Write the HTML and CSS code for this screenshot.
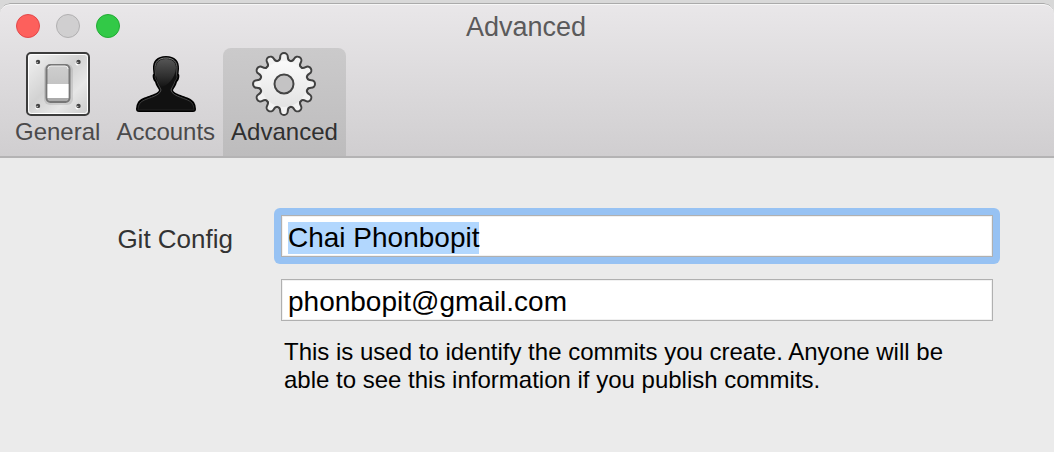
FILE: index.html
```
<!DOCTYPE html>
<html lang="en">
<head>
<meta charset="utf-8">
<title>Advanced</title>
<link rel="stylesheet" href="styles.css">
</head>
<body>
<main class="window">
  <header class="header">
    <div class="titlebar">
      <div class="controls">
        <button class="control close" type="button" aria-label="Close"></button>
        <button class="control minimize" type="button" aria-label="Minimize" disabled></button>
        <button class="control expand" type="button" aria-label="Zoom"></button>
      </div>
      <h1 class="title">Advanced</h1>
    </div>
    <nav class="tabs">
      <button class="tab" type="button">
        <svg class="icon" viewBox="0 0 64 64" aria-hidden="true">
          <defs>
            <linearGradient id="plate" x1="0" y1="0" x2="1" y2="1"><stop offset="0" stop-color="#f4f4f4"/><stop offset=".45" stop-color="#d2d2d2"/><stop offset=".7" stop-color="#e6e6e6"/><stop offset="1" stop-color="#cacaca"/></linearGradient>
            <linearGradient id="rocker" x1="0" y1="0" x2="0" y2="1"><stop offset="0" stop-color="#cfcfcf"/><stop offset="1" stop-color="#b9b9b9"/></linearGradient>
          </defs>
          <rect x="1" y="1" width="62" height="62" rx="4" fill="url(#plate)" stroke="#3c3c3c" stroke-width="2"/>
          <rect x="2.5" y="2.5" width="59" height="59" rx="3" fill="none" stroke="#fff"/>
          <rect x="18" y="12" width="29" height="41" rx="6" fill="#888" opacity=".25"/>
          <rect x="20.500" y="13" width="23" height="37" rx="4" fill="url(#rocker)" stroke="#777" stroke-width="2"/>
          <path d="M22 17q0-3 3-3h14q3 0 3 3" fill="none" stroke="#eee"/>
          <path d="M21.500 32h21v14h-21z" fill="#fff"/>
          <path d="M22 46h20q0 3-3 3H25q-3 0-3-3" fill="#aaa"/>
          <g fill="#fff"><circle cx="11.500" cy="11.500" r="2"/><circle cx="51.500" cy="11.500" r="2"/><circle cx="11.500" cy="55.500" r="2"/><circle cx="51.500" cy="55.500" r="2"/></g>
          <g fill="#444"><circle cx="12" cy="10" r="2.200"/><circle cx="52.500" cy="10" r="2.200"/><circle cx="12" cy="54" r="2.200"/><circle cx="52.500" cy="54" r="2.200"/></g>
          <g fill="#bbb"><circle cx="11.200" cy="10.500" r=".8"/><circle cx="51.700" cy="10.500" r=".8"/><circle cx="11.200" cy="54.500" r=".8"/><circle cx="51.700" cy="54.500" r=".8"/></g>
        </svg>
        <span>General</span>
      </button>
      <button class="tab" type="button">
        <svg class="icon" viewBox="0 0 64 64" aria-hidden="true">
          <defs>
            <linearGradient id="head" x1="0" y1="0" x2="0" y2="1"><stop offset="0" stop-color="#555"/><stop offset=".6" stop-color="#303030"/><stop offset="1" stop-color="#141414"/></linearGradient>
            <linearGradient id="rim" x1="0" y1="0" x2="0" y2="1"><stop offset="0" stop-color="#888"/><stop offset=".4" stop-color="#333"/><stop offset=".65" stop-color="#555"/><stop offset="1" stop-color="#222"/></linearGradient>
          </defs>
          <path d="M32 4C23 4 18.500 9 19 17L19.500 22C18 22 18.500 28 21 30C22 34 24 36 25 38C24 43 8 44 4 50Q2 53 2 57Q2 60 5 60H59Q62 60 62 57Q62 53 60 50C56 44 40 43 39 38C40 36 42 34 43 30C45.500 28 46 22 44.500 22L45 17C45.500 9 41 4 32 4Z" fill="#000"/>
          <path d="M32 6C24.500 6 20.500 10 21 17L21.500 23C20.500 24 21 27 23 29C24 33 26 35 27 38C26 45 10 46 6 51Q4 53.500 4 58H60Q60 53.500 58 51C54 46 38 45 37 38C38 35 40 33 41 29C43 27 43.500 24 42.500 23L43 17C43.500 10 39.500 6 32 6Z" fill="#111" stroke="url(#rim)"/>
          <path d="M22 16C22 10 26 7 32 7C38 7 42 10 42 16C41 27 33 34 27 35C24 31 23 27 22 24Z" fill="url(#head)"/>
        </svg>
        <span>Accounts</span>
      </button>
      <button class="tab active" type="button" aria-current="page">
        <svg class="icon" viewBox="0 0 64 64" aria-hidden="true">
          <defs>
            <linearGradient id="metal" x1="0" y1="0" x2="0" y2="64" gradientUnits="userSpaceOnUse"><stop offset="0" stop-color="#fff"/><stop offset="1" stop-color="#dedede"/></linearGradient>
            <path id="tooth" d="M-5.500-22C-3.500-23-2.800-24.500-2.800-27.200A2.800 2.800 0 0 1 2.800-27.200C2.800-24.500 3.500-23 5.500-22Z"/>
            <g id="teeth"><use href="#tooth"/><use href="#tooth" transform="rotate(30)"/><use href="#tooth" transform="rotate(60)"/><use href="#tooth" transform="rotate(90)"/><use href="#tooth" transform="rotate(120)"/><use href="#tooth" transform="rotate(150)"/><use href="#tooth" transform="rotate(180)"/><use href="#tooth" transform="rotate(210)"/><use href="#tooth" transform="rotate(240)"/><use href="#tooth" transform="rotate(270)"/><use href="#tooth" transform="rotate(300)"/><use href="#tooth" transform="rotate(330)"/></g>
          </defs>
          <g transform="translate(32 32)">
            <g fill="#414141" stroke="#414141" stroke-width="4"><use href="#teeth"/><circle r="23"/></g>
            <g fill="#f2f2f2"><use href="#teeth"/></g>
          </g>
          <circle cx="32" cy="32" r="23" fill="url(#metal)"/>
          <circle cx="32" cy="32" r="9.500" fill="#c4c3c4" stroke="#444" stroke-width="2"/>
        </svg>
        <span>Advanced</span>
      </button>
    </nav>
  </header>
  <form class="form">
    <label class="label" for="name">Git Config</label>
    <div class="ring"><input class="field" id="name" type="text" value="Chai Phonbopit" spellcheck="false"></div>
    <div class="ring"><input class="field" id="email" type="text" value="phonbopit@gmail.com" aria-label="Email" aria-describedby="help" spellcheck="false"></div>
    <p class="help" id="help">This is used to identify the commits you create. Anyone will be able to see this information if you publish commits.</p>
  </form>
</main>
<script src="script.js"></script>
</body>
</html>
```
FILE: script.js
```
const nameField = document.getElementById("name");
nameField.focus();
nameField.select();
```
FILE: styles.css
```
* { box-sizing: border-box; }
body {
  margin: 0;
  padding-top: 3px;
  background: #d8d8d8;
  font-family: "Liberation Sans", Arial, sans-serif;
}
.window {
  min-height: calc(100vh - 3px);
  background: #ebebeb;
  border-radius: 10px 10px 0 0;
  overflow: hidden;
}
.header {
  background: linear-gradient(#e9e7e9, #d0ced0);
  border-top: 1px solid #aaa;
  border-bottom: 2px solid #b4b3b4;
  border-radius: 10px 10px 0 0;
  box-shadow: inset 0 1px #f6f6f6;
}
.titlebar {
  display: grid;
  grid-template-columns: 1fr auto 1fr;
  align-items: center;
  height: 44px;
  padding: 0 18px 0 16px;
}
.controls { display: flex; gap: 16px; }
.control {
  width: 24px;
  height: 24px;
  padding: 0;
  border: 1px solid;
  border-radius: 50%;
}
.close { background: #fd605c; border-color: #e2484a; }
.minimize { background: #d0cfd0; border-color: #b1b0b1; }
.expand { background: #32c947; border-color: #22ab34; }
.title {
  margin: 0;
  padding-top: 2px;
  font-size: 27px;
  line-height: 32px;
  font-weight: 400;
  color: #5b5a5b;
}
.tabs { display: flex; padding-left: 7px; }
.tab {
  display: flex;
  flex-direction: column;
  align-items: center;
  gap: 3px;
  padding: 4px 8px 11px;
  border: 0;
  border-radius: 8px 8px 0 0;
  background: none;
  font: 24px/26px "Liberation Sans", Arial, sans-serif;
  color: #4b4a4b;
}
.active {
  background: linear-gradient(#cbcacb, #bdbcbd);
  color: #303030;
}
.icon { display: block; width: 64px; height: 64px; }
.form {
  display: grid;
  grid-template-columns: 233px 1fr;
  column-gap: 41px;
  row-gap: 8px;
  align-items: center;
  padding: 50px 54px 32px 0;
}
.label {
  text-align: right;
  font-size: 26px;
  line-height: 32px;
  color: #333;
  padding-top: 5px;
}
.ring {
  grid-column: 2;
  padding: 7px;
  border-radius: 6px;
}
.ring:focus-within { background: #97c2f3; }
.field {
  display: block;
  width: 100%;
  height: 42px;
  padding: 4px 6px 1px;
  border: 1px solid #b0b0b0;
  border-radius: 0;
  background: #fff;
  box-shadow: inset 0 0 0 1px #f1f1f1;
  font: 28px/34px "Liberation Sans", Arial, sans-serif;
  color: #000;
}
.field:focus { outline: none; }
.field::selection { background: #b2d7fe; color: #000; }
.help {
  grid-column: 2;
  margin: 2px 0 0;
  padding: 0 32px 0 10px;
  font-size: 24px;
  line-height: 28px;
  color: #000;
}
```
